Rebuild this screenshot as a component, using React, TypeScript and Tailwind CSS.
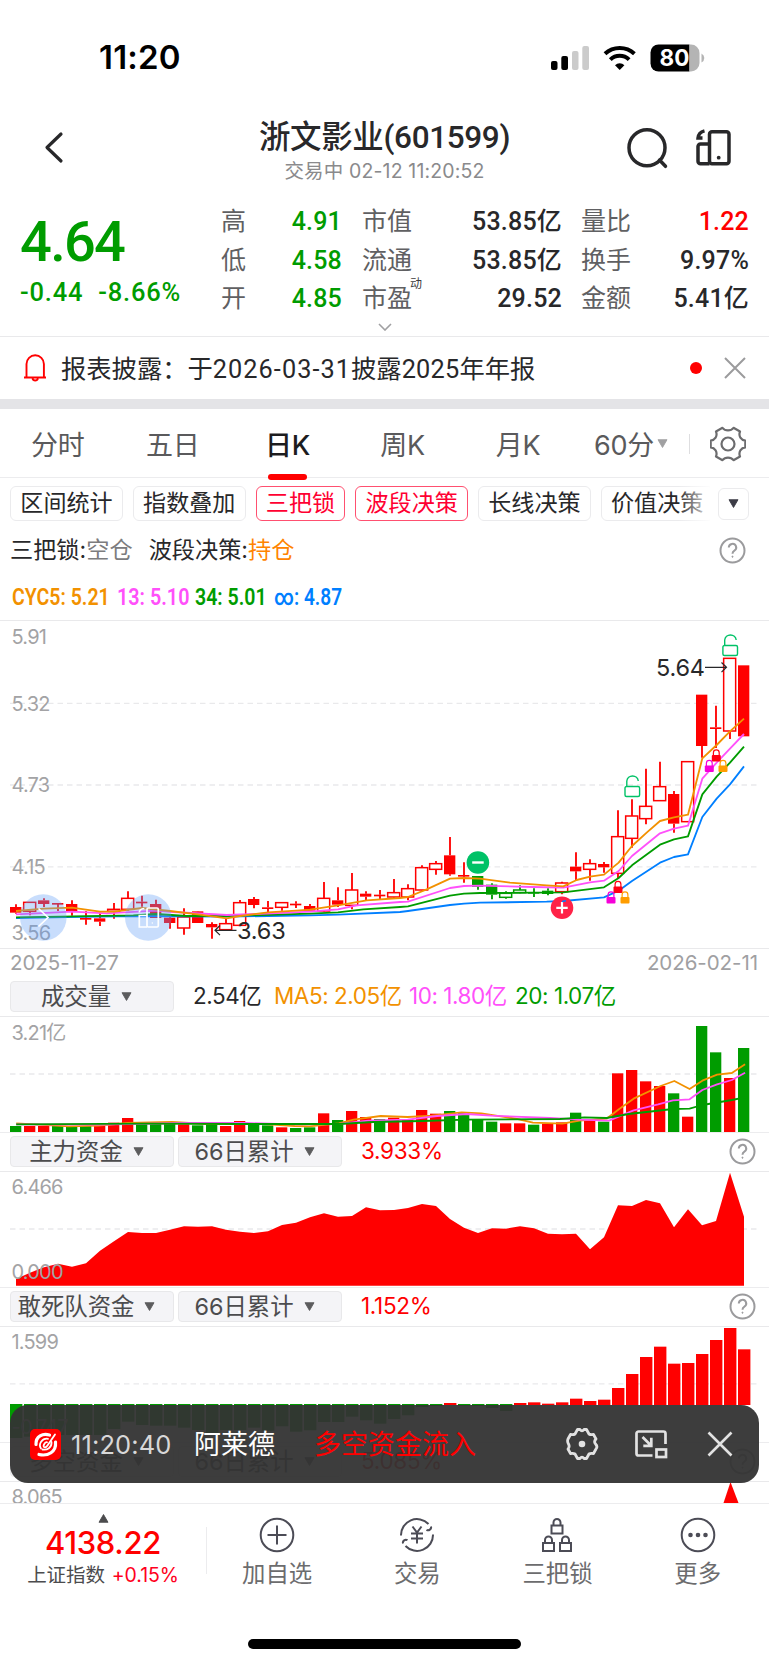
import React from "react";

const RED = "#ff0000";
const GREEN = "#009c00";
const ORANGE = "#f29100";
const PINK = "#ff50fa";
const BLUE = "#007fff";

type Candle = [number, number, number, number, "h" | "f" | "g" | "G"];

// wick top, body top, body bottom, wick bottom, kind
const candles: Candle[] = [
  [865, 873, 890, 893, "f"], [858, 859, 886, 898, "h"], [847, 853, 864, 873, "f"], [861, 861, 864, 885, "f"],
  [853, 864, 886, 899, "f"], [885, 906, 910, 926, "f"], [890, 907, 917, 930, "f"], [861, 880, 886, 908, "h"],
  [826, 847, 880, 884, "h"], [839, 857, 861, 872, "f"], [851, 864, 906, 906, "f"], [896, 905, 921, 938, "f"],
  [877, 903, 936, 956, "h"], [885, 886, 921, 921, "f"], [919, 924, 934, 968, "f"], [905, 923, 941, 941, "h"],
  [852, 860, 928, 930, "h"], [843, 849, 867, 877, "f"], [855, 874, 878, 888, "f"], [858, 860, 874, 884, "h"],
  [856, 863, 867, 876, "f"], [864, 870, 884, 884, "f"], [798, 847, 885, 887, "h"], [814, 853, 866, 873, "f"],
  [771, 822, 868, 880, "h"], [826, 833, 842, 852, "f"], [822, 836, 840, 850, "f"], [789, 830, 843, 845, "h"],
  [805, 818, 843, 853, "h"], [748, 755, 822, 824, "h"], [735, 743, 760, 776, "h"], [663, 718, 775, 779, "f"],
  [739, 777, 781, 800, "f"], [780, 780, 813, 821, "G"], [802, 806, 836, 850, "G"], [826, 832, 844, 848, "g"],
  [808, 822, 830, 832, "g"], [817, 828, 832, 843, "G"], [817, 824, 834, 838, "G"], [797, 801, 827, 835, "h"],
  [709, 752, 766, 794, "f"], [730, 743, 760, 794, "h"], [738, 744, 754, 770, "f"], [583, 662, 772, 787, "h"],
  [550, 600, 667, 695, "h"], [458, 571, 608, 625, "h"], [437, 512, 554, 555, "h"], [525, 534, 623, 650, "f"],
  [436, 437, 617, 618, "h"], [236, 236, 390, 425, "f"], [269, 334, 338, 396, "f"], [126, 127, 345, 369, "h"],
  [148, 148, 361, 361, "f"],
];

const cycLines: [string, string][] = [
  [BLUE, "48,906 200,903 400,900 680,902 930,898 1014,896 1200,888 1224,885 1350,867 1392,863 1440,860 1640,857 1690,855 1812,844 1856,824 1896,795 1980,740 2022,723 2064,715 2107,603 2150,548 2190,505 2232,451"],
  [GREEN, "48,904 400,898 468,894 560,900 680,900 930,893 1014,889 1090,880 1200,873 1224,871 1350,839 1392,833 1440,831 1600,830 1690,829 1812,814 1856,786 1896,748 1980,686 2022,670 2064,661 2107,535 2150,482 2190,440 2232,392"],
  [PINK, "48,895 216,887 320,892 468,884 520,888 680,897 800,893 930,887 1014,880 1070,868 1200,858 1224,857 1350,816 1392,810 1440,809 1600,813 1690,815 1770,799 1812,794 1856,765 1896,720 1980,652 2022,638 2064,629 2107,488 2150,440 2190,398 2232,354"],
  [ORANGE, "48,885 132,878 216,875 300,887 342,887 426,876 510,885 600,896 680,907 720,900 804,889 888,884 930,881 1014,868 1100,853 1200,846 1224,843 1280,820 1350,788 1392,786 1440,788 1530,800 1640,808 1690,811 1730,792 1770,782 1812,776 1856,740 1896,690 1940,650 1980,615 2022,604 2064,596 2107,427 2150,387 2190,346 2232,308"],
];

const volumes =
  "G468 R468 R468 G468 G468 G468 R468 R458 R444 G462 G462 G462 R463 G466 G460 R468 R453 G464 G466 R472 G474 G472 R430 G450 R423 R441 G447 R443 R447 R420 R431 G423 G427 G447 G455 R460 R460 G464 R461 R457 G428 R450 G455 R310 R300 R334 R348 G370 R440 G168 G247 R324 G234".split(" ");

const volumeLines: [string, [number, number][]][] = [
  [ORANGE, [[33, 460], [140, 469], [200, 467], [260, 459], [350, 456], [420, 462], [540, 462], [600, 468], [630, 469], [690, 460], [720, 449], [775, 438], [830, 441], [880, 437], [940, 427], [980, 430], [1010, 437], [1050, 446], [1085, 458], [1145, 461], [1180, 452], [1235, 446], [1260, 418], [1290, 386], [1345, 348], [1373, 333], [1404, 357], [1430, 332], [1460, 314], [1490, 309], [1517, 283]]],
  [PINK, [[33, 463], [200, 464], [380, 459], [500, 459], [600, 463], [690, 462], [750, 452], [830, 449], [890, 438], [950, 432], [1000, 437], [1120, 444], [1180, 449], [1240, 452], [1290, 421], [1340, 403], [1370, 391], [1404, 388], [1430, 360], [1460, 343], [1490, 330], [1517, 308]]],
  [GREEN, [[33, 463], [300, 461], [500, 462], [690, 462], [760, 456], [860, 453], [950, 449], [1140, 447], [1190, 442], [1235, 444], [1280, 432], [1370, 417], [1404, 416], [1430, 405], [1490, 390], [1517, 382]]],
];

const mainFunds = [357, 338, 322, 311, 320, 310, 272, 244, 216, 219, 219, 209, 199, 200, 199, 209, 215, 219, 214, 195, 188, 172, 160, 170, 168, 142, 151, 150, 144, 132, 138, 177, 203, 219, 205, 206, 199, 205, 221, 223, 221, 268, 232, 136, 138, 120, 130, 202, 148, 196, 183, 38, 170];

const squadFunds = [354, 350, 345, 345, 345, 345, 345, 327, 305, 315, 317, 317, 323, 330, 340, 330, 330, 323, 332, 319, 335, 331, 306, 306, 290, 301, 311, 297, 286, 261, 258, 249, 257, 258, 264, 273, 249, 247, 251, 247, 236, 243, 239, 204, 162, 111, 80, 131, 129, 102, 60, 24, 88];

const px = (i: number) => 16 + 14 * i;

function Grid({ y }: { y: number }) {
  return <line x1="10" x2="760" y1={y} y2={y} stroke="#e9e9eb" strokeWidth="1.3" strokeDasharray="5.5 4" />;
}

function AxisLabel({ y, x = 11.5, children }: { y: number; x?: number; children: string }) {
  return (
    <text x={x} y={y} fill="#a3a3a5" fontSize="20" letterSpacing="-0.8" className="font-['Inter','Noto_Sans_CJK_SC',sans-serif]">
      {children}
    </text>
  );
}

function OpenLock({ x, y }: { x: number; y: number }) {
  return (
    <g transform={`translate(${x} ${y})`} fill="none" stroke="#00c267" strokeWidth="1.4">
      <rect x="-7.3" y="0" width="14.6" height="10" rx="1.5" fill="#fff" />
      <path d="M-5.5 0V-5.5A5.8 5.8 0 0 1 6 -5.5" />
    </g>
  );
}

function SmallLock({ x, y, color }: { x: number; y: number; color: string }) {
  return (
    <g transform={`translate(${x} ${y})`}>
      <rect x="-4.5" y="0" width="9" height="6.6" rx="1" fill={color} />
      <path d="M-2.9 0.5V-2.2A2.9 2.9 0 0 1 2.9 -2.2V0.5" fill="none" stroke={color} strokeWidth="1.2" />
    </g>
  );
}

function CandleChart() {
  return (
    <svg viewBox="0 620 769 327" className="block h-[327px] w-full shrink-0">
      <Grid y={702.3} />
      <Grid y={784} />
      <Grid y={865.8} />
      <AxisLabel y={643.2}>5.91</AxisLabel>
      <AxisLabel y={709.5}>5.32</AxisLabel>
      <AxisLabel y={791.3}>4.73</AxisLabel>
      <AxisLabel y={873.3}>4.15</AxisLabel>
      <AxisLabel y={939}>3.56</AxisLabel>
      <g transform="translate(0 615) scale(0.33333)">
        {candles.map(([wt, bt, bb, wb, kind], i) => {
          const c = kind === "h" || kind === "f" ? RED : GREEN;
          const hollow = kind === "h" || kind === "g";
          const x = 48 + 42 * i;
          return (
            <g key={i} stroke={c} strokeWidth={hollow ? 4.5 : 5}>
              <path d={`M${x} ${wt}V${bt}M${x} ${bb}V${wb}`} strokeWidth="5.5" />
              {hollow ? (
                <rect x={x - 19} y={bt} width="36" height={Math.max(bb - bt, 4)} fill="#fff" />
              ) : (
                <rect x={x - 18} y={bt} width="34" height={Math.max(bb - bt, 5)} fill={c} stroke="none" />
              )}
            </g>
          );
        })}
        {cycLines.map(([c, pts]) => (
          <polyline key={c} points={pts} fill="none" stroke={c} strokeWidth="5.5" strokeLinejoin="round" />
        ))}
      </g>
      <circle cx="477.9" cy="861.5" r="11.3" fill="#00c267" />
      <path d="M472.2 861.5h11.5" stroke="#fff" strokeWidth="2.4" />
      <circle cx="562" cy="906.8" r="11.3" fill="#ff2247" />
      <path d="M556.3 906.8h11.4M562 901.1v11.4" stroke="#fff" strokeWidth="2.2" />
      <path d="M562 900.5L566 899.8" stroke={BLUE} strokeWidth="1.5" />
      <OpenLock x={632.3} y={785.5} />
      <OpenLock x={730.2} y={644.5} />
      <SmallLock x={618} y={885.5} color="#ff0012" />
      <SmallLock x={611} y={896} color="#f500d8" />
      <SmallLock x={625} y={896} color="#ff9d00" />
      <SmallLock x={716.3} y={754} color="#ff0012" />
      <SmallLock x={709.3} y={764.5} color="#f500d8" />
      <SmallLock x={723} y={764.5} color="#ff9d00" />
      <g className="font-['Inter',sans-serif]" fill="#28282a" fontSize="23.5" letterSpacing="-0.2">
        <text x="656" y="675">5.64</text>
        <text x="237" y="937.5">3.63</text>
      </g>
      <path d="M705 666.3h21.5M721.5 661.5l5 4.8-5 4.8M236.5 929.3h-21M220 924.5l-5 4.8 5 4.8" fill="none" stroke="#28282a" strokeWidth="1.2" />
      <g>
        <circle cx="43.3" cy="916.5" r="23.3" fill="#5e9cf5" fillOpacity="0.34" />
        <circle cx="148.3" cy="916.5" r="23.3" fill="#5e9cf5" fillOpacity="0.34" />
        <path d="M38.5 907.5l9.5 9-9.5 9" fill="none" stroke="#fff" strokeWidth="1.7" />
        <g fill="none" stroke="#fff" strokeWidth="1.7">
          <rect x="147" y="907" width="11.3" height="19" rx="1.2" />
          <path d="M147 914.5h-7.7v11.5h7.7M139.3 911.5q0-3.5 5-4" />
          <circle cx="152.3" cy="922" r="0.7" fill="#fff" stroke="none" />
        </g>
      </g>
    </svg>
  );
}

function VolumeChart() {
  return (
    <svg viewBox="0 0 769 115" className="block h-[115px] w-full shrink-0">
      <Grid y={57} />
      {volumes.map((v, i) => {
        const y = Number(v.slice(1)) / 3 - 47;
        return <rect key={i} x={px(i) - 6} y={y} width="11.3" height={115 - y} fill={v[0] === "R" ? RED : GREEN} />;
      })}
      {volumeLines.map(([c, pts]) => (
        <polyline key={c} points={pts.map(([x, y]) => `${x / 2.036},${y / 3 - 47}`).join(" ")} fill="none" stroke={c} strokeWidth="1.8" strokeLinejoin="round" />
      ))}
      <AxisLabel y={22.5}>3.21亿</AxisLabel>
    </svg>
  );
}

function MainFundsChart() {
  const pts = mainFunds.map((v, i) => `${px(i)},${v / 3 - 12}`).join(" ");
  return (
    <svg viewBox="0 0 769 115" className="block h-[115px] w-full shrink-0">
      <Grid y={57} />
      <polygon points={`16,113.8 ${pts} ${px(52)},113.8`} fill={RED} />
      <AxisLabel y={22}>6.466</AxisLabel>
      <AxisLabel y={107}>0.000</AxisLabel>
    </svg>
  );
}

function SquadFundsChart() {
  return (
    <svg viewBox="0 0 769 115" className="block h-[115px] w-full shrink-0">
      <Grid y={56.8} />
      {squadFunds.map((v, i) => {
        const y = v / 3 - 7;
        const up = v < 254;
        return <rect key={i} x={px(i) - 6} y={up ? y : 77} width="12.4" height={up ? 78 - y : y - 77} fill={up ? RED : GREEN} />;
      })}
      <AxisLabel y={22}>1.599</AxisLabel>
      <AxisLabel y={107}>-0.747</AxisLabel>
    </svg>
  );
}

function Help({ className = "" }: { className?: string }) {
  return (
    <svg viewBox="0 0 27 27" className={`h-[27px] w-[27px] shrink-0 ${className}`} fill="none" stroke="#9b9b9d" strokeWidth="2">
      <circle cx="13.5" cy="13.5" r="12" />
      <path d="M9.8 10.6a3.7 3.7 0 1 1 5.6 3.1c-1.3.8-1.9 1.4-1.9 3" />
      <circle cx="13.5" cy="19.7" r="0.6" fill="#9b9b9d" stroke="#9b9b9d" strokeWidth="0.9" />
    </svg>
  );
}

function Triangle({ className = "" }: { className?: string }) {
  return (
    <svg viewBox="0 0 12 10" className={`h-[9px] w-[11px] ${className}`}>
      <path d="M1 .8h10L6 9.4z" fill="currentColor" stroke="currentColor" strokeLinejoin="round" />
    </svg>
  );
}

function Pill({ children }: { children: string }) {
  return (
    <div className="flex h-[31px] w-[164px] items-center justify-center gap-[10px] rounded-[4px] border border-[#e8e8ea] bg-[#f4f4f7] pr-[11px] text-[23.4px] tracking-normal text-[#4c4c4e]">
      <span>{children}</span>
      <Triangle className="text-[#5c5c5e]" />
    </div>
  );
}

function IndicatorHeader({ name, value }: { name: string; value: string }) {
  return (
    <div className="flex h-10 shrink-0 items-center gap-[4px] border-y border-[#e9e9eb] border-t-[#ececee] pb-px pl-[10px] pr-[13px]">
      <Pill>{name}</Pill>
      <Pill>66日累计</Pill>
      <span className="ml-[15px] text-[22.5px] tracking-[-0.3px] text-[#ff0000]">{value}</span>
      <Help className="ml-auto" />
    </div>
  );
}

const quotes: { label: string; value: string; tone: string; sup?: string }[][] = [
  [
    { label: "高", value: "4.91", tone: "text-[#009c00]" },
    { label: "低", value: "4.58", tone: "text-[#009c00]" },
    { label: "开", value: "4.85", tone: "text-[#009c00]" },
  ],
  [
    { label: "市值", value: "53.85亿", tone: "text-[#28282a]" },
    { label: "流通", value: "53.85亿", tone: "text-[#28282a]" },
    { label: "市盈", value: "29.52", tone: "text-[#28282a]", sup: "动" },
  ],
  [
    { label: "量比", value: "1.22", tone: "text-[#ff0000]" },
    { label: "换手", value: "9.97%", tone: "text-[#28282a]" },
    { label: "金额", value: "5.41亿", tone: "text-[#28282a]" },
  ],
];

function QuoteColumn({ rows, className }: { rows: (typeof quotes)[number]; className: string }) {
  return (
    <div className={`flex flex-col pt-px ${className}`}>
      {rows.map((r) => (
        <div key={r.label} className="flex h-[39px] items-center justify-between text-[25px]">
          <span className="relative text-[#606062]">
            {r.label}
            {r.sup && <span className="absolute -top-[8px] left-[48px] text-[12px] leading-[12px] text-[#3c3c3e]">{r.sup}</span>}
          </span>
          <span className={`font-['Roboto','Noto_Sans_CJK_SC',sans-serif] font-medium tracking-[0.2px] ${r.tone}`}>{r.value}</span>
        </div>
      ))}
    </div>
  );
}

function Chip({ children, active = false }: { children: string; active?: boolean }) {
  return (
    <div
      className={`flex h-[35px] shrink-0 items-center rounded-[6px] border px-[9.3px] text-[23.1px] ${
        active ? "border-[#ff5070] text-[#ff0032]" : "border-[#ebebed] text-[#28282a]"
      }`}
    >
      {children}
    </div>
  );
}

function NavItem({ label, children }: { label: string; children: React.ReactNode }) {
  return (
    <div className="flex w-[140.2px] flex-col items-center text-[#4c4c56]">
      <svg viewBox="0 0 36 36" className="mt-[13px] h-9 w-9" fill="none" stroke="currentColor" strokeWidth="2">
        {children}
      </svg>
      <span className="mt-[4px] text-[23.4px] leading-[34px] text-[#6c6c6e]">{label}</span>
    </div>
  );
}

function Toast() {
  return (
    <div className="absolute left-[10px] top-[1405px] flex h-[78px] w-[749px] items-center rounded-[18px] bg-[#333333]/95 text-[25.5px]">
      <svg viewBox="0 0 31 31" className="ml-[20px] h-[31px] w-[31px]">
        <rect width="31" height="31" rx="5" fill="#ff0000" />
        <g fill="none" stroke="#fff" strokeLinecap="round">
          <path d="M6 15.500C5.500 7 13 4 19.500 6" strokeWidth="3.200" />
          <path d="M25.500 13C26.500 23 18 27.500 9 25.500" strokeWidth="3.200" />
          <path d="M18 9.800C12 9 8 15 11 19.500" strokeWidth="1.800" />
          <path d="M25 5.500L17.500 16.500C15.500 19.500 12.500 18.500 14 15.500S17 13.200 17 13.200" strokeWidth="1.800" />
          <path d="M21.500 13C22 18.500 17 21.500 12.500 20.500" strokeWidth="1.800" />
        </g>
      </svg>
      <span className="ml-[10px] mt-px w-[123px] tracking-[0.100px] text-[#d8d8d8]">11:20:40</span>
      <span className="mt-px w-[120px] text-[27px] text-white">阿莱德</span>
      <span className="mt-px text-[27px] text-[#ff0000]">多空资金流入</span>
      <svg viewBox="0 0 34 34" className="ml-auto h-[34px] w-[34px]" fill="none" stroke="#e2e2e2" strokeWidth="2.8" strokeLinejoin="round">
        <path d="M12.500 2.500h2.500q2 2.800 4 0h2.500l2.500 4.500q1.500 1 4.500 .500l2.500 4.500q-2.500 2.500-.500 5q2.500 2.500 .500 5l-2.500 4.500q-3-.500-4.500 .500l-2.500 4.500h-2.500q-2-2.800-4 0h-2.500l-2.500-4.500q-1.500-1-4.500-.500l-2.500-4.500q2-2.500 .500-5q-1.500-2.500-.500-5l2.500-4.500q3 .500 4.500-.500z" />
        <circle cx="17" cy="17" r="3.300" fill="#e2e2e2" stroke="none" />
      </svg>
      <svg viewBox="0 0 34 30" className="ml-[35px] h-[30px] w-[34px]" fill="none" stroke="#e2e2e2" strokeWidth="2.700">
        <path d="M31.500 15V4.500a2 2 0 0 0-2-2h-25a2 2 0 0 0-2 2v20a2 2 0 0 0 2 2h14M8.500 8l8 8M17.300 8.800v8H9.300" />
        <rect x="22.500" y="20.500" width="9.500" height="7.500" />
      </svg>
      <svg viewBox="0 0 26 26" className="ml-[39px] mr-[26px] h-[26px] w-[26px]" fill="none" stroke="#e2e2e2" strokeWidth="2.600">
        <path d="M1.500 1.500l23 23M24.500 1.500l-23 23" />
      </svg>
    </div>
  );
}

export default function App() {
  return (
    <div className="relative flex h-[1665px] w-[769px] flex-col overflow-hidden bg-white font-['Inter','Noto_Sans_CJK_SC',sans-serif] leading-none text-[#28282a]">
      {/* status bar */}
      <div className="flex h-[100px] shrink-0 items-center justify-between pl-[99px] pr-[64px] pt-[15px]">
        <span className="text-[33px] font-semibold tracking-[0.200px] text-black">11:20</span>
        <svg viewBox="0 0 154 28" className="h-7 w-[154px]">
          <rect x="0" y="17" width="6.5" height="9" rx="2" />
          <rect x="10.3" y="12" width="6.700" height="14" rx="2" />
          <rect x="21" y="7" width="6.500" height="19" rx="2" fill="#cbcbcb" />
          <rect x="31.300" y="2" width="6.700" height="24" rx="2" fill="#cbcbcb" />
          <g fill="none" stroke="#000" strokeWidth="4">
            <path d="M54 9.800a21.500 21.500 0 0 1 29.400 0" />
            <path d="M59.300 15.600a13.500 13.500 0 0 1 18.800 0" />
          </g>
          <path d="M68.700 26l-4.700-4.800a6.800 6.800 0 0 1 9.400 0z" />
          <path d="M107.500.5h31v27h-31a8 8 0 0 1-8-8v-11a8 8 0 0 1 8-8z" />
          <path d="M138.500.5h1.500a8.500 8.500 0 0 1 8.500 8.500v10a8.500 8.500 0 0 1-8.500 8.500h-1.500z" fill="#b4b4b4" />
          <path d="M150.500 9.500q2.800 1.500 2.800 4.500t-2.800 4.500z" fill="#b4b4b4" />
          <text x="108.500" y="22" fill="#fff" fontSize="22.500" fontWeight="700" className="font-['Inter',sans-serif]">80</text>
        </svg>
      </div>

      {/* title bar */}
      <div className="flex h-[101px] shrink-0 items-start justify-between px-[36px]">
        <div className="flex w-[120px]">
          <svg viewBox="0 0 36 44" className="ml-[3px] mt-[25px] h-11 w-9" fill="none" stroke="#28282a" strokeWidth="3.200" strokeLinejoin="round" strokeLinecap="round">
            <path d="M22 9L8 22.500 22 36" />
          </svg>
        </div>
        <div className="flex flex-col items-center">
          <h1 className="mt-[20px] font-['Roboto','Noto_Sans_CJK_SC',sans-serif] text-[31.500px] font-medium leading-[36px] tracking-[-0.350px]">浙文影业(601599)</h1>
          <span className="mt-[5px] text-[19.500px] leading-[20px] tracking-[0.150px] text-[#8a8a8c]">交易中 02-12 11:20:52</span>
        </div>
        <svg viewBox="0 0 120 60" className="mt-[18px] h-[60px] w-[120px]" fill="none" stroke="#28282a" strokeWidth="3.500">
          <circle cx="34" cy="29.700" r="18" />
          <path d="M46.500 42l6 6.300" strokeLinecap="round" />
          <rect x="96.500" y="13.800" width="19.500" height="32" rx="2.500" />
          <path d="M96.500 26h-9a2.500 2.500 0 0 0-2.500 2.500v14.800a2.500 2.500 0 0 0 2.500 2.500h9" />
          <circle cx="105.700" cy="39.700" r="1.900" fill="#28282a" stroke="none" />
          <path d="M91.500 12.800q-6 1.500-6.500 7.200h4.500" strokeWidth="3.400" />
        </svg>
      </div>

      {/* quote */}
      <div className="flex h-[136px] shrink-0 flex-col border-b border-[#e9e9eb]">
        <div className="flex h-[117px]">
          <div className="w-[221px] pl-[20px] font-['Roboto',sans-serif] font-medium text-[#009c00]">
            <div className="pt-[13px] text-[56px] leading-[56px] tracking-[-1.700px]">4.64</div>
            <div className="mt-[8px] flex gap-[15px] text-[25.500px] leading-[28px] tracking-[0.800px]">
              <span>-0.44</span>
              <span>-8.66%</span>
            </div>
          </div>
          <QuoteColumn rows={quotes[0]} className="w-[121px]" />
          <QuoteColumn rows={quotes[1]} className="ml-[20px] w-[200px]" />
          <QuoteColumn rows={quotes[2]} className="ml-[19px] w-[168px]" />
        </div>
        <svg viewBox="0 0 14 8" className="mx-auto mt-[5px] h-2 w-[14px]" fill="none" stroke="#a0a0a2" strokeWidth="1.600">
          <path d="M1 1l6 6 6-6" />
        </svg>
      </div>

      {/* notice */}
      <div className="flex h-[62px] shrink-0 items-center pl-[23px] pr-[23px]">
        <svg viewBox="0 0 24 30" className="h-[30px] w-6" fill="none" stroke="#ff0000" strokeWidth="1.900">
          <path d="M1 24.500h22M3.500 24V11a8.700 8.700 0 0 1 17.400 0v13M9.500 25.500a2.800 2.800 0 0 0 5.400 0" />
        </svg>
        <span className="ml-[14px] mt-[4px] font-['Roboto','Noto_Sans_CJK_SC',sans-serif] text-[25.300px]">
          报表披露：于<span className="tracking-[1.050px]">2026-03-31</span>披露<span className="tracking-[0.250px]">2025</span>年年报
        </span>
        <span className="ml-auto h-[12px] w-[12px] rounded-full bg-[#ff0000]" />
        <svg viewBox="0 0 22 22" className="ml-[22px] h-[22px] w-[22px]" fill="none" stroke="#9b9b9d" strokeWidth="2">
          <path d="M1 1l20 20M21 1L1 21" />
        </svg>
      </div>
      <div className="h-[10px] shrink-0 bg-[#e4e4e7]" />

      {/* period tabs */}
      <div className="flex h-[69px] shrink-0 items-center border-b border-[#ececee] pt-[5px] text-[27px] tracking-[-0.300px] text-[#5a5a5c]">
        <span className="w-[115px] pl-[31px]">分时</span>
        <span className="w-[115px] pl-[31px]">五日</span>
        <span className="relative flex h-full w-[115px] items-center justify-center font-medium text-[#1c1c1e]">
          日K
          <span className="absolute -bottom-[3px] left-[38px] h-[6px] w-[39px] rounded-[3px] bg-[#ff0000]" />
        </span>
        <span className="w-[115px] text-center">周K</span>
        <span className="w-[116px] text-center">月K</span>
        <span className="flex w-[112px] items-center gap-[3px] pl-[18px]">
          60分
          <Triangle className="-mt-[4px] h-[8px] text-[#a0a0a2]" />
        </span>
        <span className="-mt-[4px] ml-[1px] h-[20px] w-px bg-[#dedee0]" />
        <svg viewBox="0 0 36 36" className="-mt-[4px] ml-[20px] h-9 w-9" fill="none" stroke="#6c6c6e" strokeWidth="2.200" strokeLinejoin="round">
          <path d="M12.500 1.800q2 2.600 5.500 2.600t5.500-2.600l6.500 3.700q-1.300 3.300.4 6.200 1.700 2.600 4.900 3v6.600q-3.200.4-4.900 3-1.700 2.900-.4 6.200l-6.500 3.700q-2-2.600-5.500-2.600t-5.500 2.600L6 30.500q1.300-3.300-.4-6.200-1.700-2.600-4.900-3v-6.600q3.200-.4 4.900-3Q7.300 8.800 6 5.500z" />
          <circle cx="18" cy="18" r="6.500" />
        </svg>
      </div>

      {/* indicator chips */}
      <div className="relative flex h-[51px] shrink-0 items-center pl-[10px]">
        <div className="flex w-[700px] gap-[9.800px] overflow-hidden">
          <Chip>区间统计</Chip>
          <Chip>指数叠加</Chip>
          <Chip active>三把锁</Chip>
          <Chip active>波段决策</Chip>
          <Chip>长线决策</Chip>
          <Chip>价值决策</Chip>
        </div>
        <div className="absolute right-[55px] top-0 h-full w-[36px] bg-gradient-to-r from-white/0 to-white" />
        <div className="ml-[8px] flex h-[32px] w-[31px] items-center justify-center rounded-[6px] border border-[#ebebed] bg-white">
          <Triangle className="text-[#3c3c46]" />
        </div>
      </div>

      {/* strategy state */}
      <div className="flex h-[43px] shrink-0 items-center pl-[10px] pr-[23px] text-[23.200px]">
        <span>三把锁:</span>
        <span className="text-[#7c7c7e]">空仓</span>
        <span className="ml-[16px]">波段决策:</span>
        <span className="text-[#ff8400]">持仓</span>
        <Help className="ml-auto" />
      </div>
      <div className="flex h-[49px] shrink-0 items-center whitespace-nowrap border-b border-[#e9e9eb] pl-[12px] pt-[3px] font-['Roboto','Noto_Sans_CJK_SC',sans-serif] text-[23px] font-semibold">
        <span className="w-[105px]">
          <span className="inline-block origin-left scale-x-[0.850] text-[#f29100]">CYC5: 5.21</span>
        </span>
        <span className="w-[78px]">
          <span className="inline-block origin-left scale-x-[0.860] text-[#ff50fa]">13: 5.10</span>
        </span>
        <span className="w-[79px]">
          <span className="inline-block origin-left scale-x-[0.850] text-[#009c00]">34: 5.01</span>
        </span>
        <span className="inline-block origin-left scale-x-[0.830] text-[#007fff]">∞: 4.87</span>
      </div>

      <CandleChart />

      <div className="flex h-[29px] shrink-0 items-center justify-between border-t border-[#e9e9eb] pl-[10px] pr-[11px] text-[20.500px] tracking-[-0.050px] text-[#a0a0a2]">
        <span>2025-11-27</span>
        <span>2026-02-11</span>
      </div>

      <div className="flex h-10 shrink-0 items-center border-b border-[#e9e9eb] pl-[10px] text-[22.500px] tracking-[-0.450px]">
        <Pill>成交量</Pill>
        <span className="ml-[19px] w-[81px]">2.54亿</span>
        <span className="w-[135px] text-[#f29100]">MA5: 2.05亿</span>
        <span className="w-[106px] text-[#ff50fa]">10: 1.80亿</span>
        <span className="text-[#009c00]">20: 1.07亿</span>
      </div>
      <VolumeChart />
      <IndicatorHeader name="主力资金" value="3.933%" />
      <MainFundsChart />
      <IndicatorHeader name="敢死队资金" value="1.152%" />
      <SquadFundsChart />
      <IndicatorHeader name="多空资金" value="5.085%" />
      <svg viewBox="0 0 769 21" className="block h-[21px] w-full shrink-0">
        <AxisLabel y={22}>8.065</AxisLabel>
        <path d="M730.500 0L738.500 21H723.500z" fill={RED} />
      </svg>

      {/* bottom navigation */}
      <div className="flex h-[162px] shrink-0 items-start border-t border-[#ececee] bg-white">
        <div className="flex w-[206px] flex-col items-center">
          <Triangle className="mt-[10px] h-[7px] w-[9px] rotate-180 text-[#4c4c4e]" />
          <span className="mt-[4px] text-[31px] font-medium leading-[31px] tracking-[-0.350px] text-[#ff0000]">4138.22</span>
          <div className="mt-[5px] flex gap-[7px] text-[19.500px] leading-[24px] tracking-[-0.100px] text-[#4c4c4e]">
            <span>上证指数</span>
            <span className="text-[#ff0020]">+0.15%</span>
          </div>
        </div>
        <span className="mt-[23px] h-[47px] w-px bg-[#ececee]" />
        <NavItem label="加自选">
          <circle cx="18" cy="18" r="16.300" />
          <path d="M18 8.500v19M8.500 18h19" />
        </NavItem>
        <NavItem label="交易">
          <path d="M2 18.500A16 16 0 0 1 29.500 7M32 9.500a3 3 0 0 1-4.500 3.300M34 17.500A16 16 0 0 1 6.500 29M4 26.500a3 3 0 0 1 4.500-3.300" />
          <path d="M13.500 9.500L18 15.500l4.500-6M18 15.500v11M12 16.500h12M12 21.500h12" />
        </NavItem>
        <NavItem label="三把锁">
          <rect x="12.500" y="8.500" width="11" height="8" />
          <path d="M14.500 8.500V5.500a3.500 3.500 0 0 1 7 0v3" />
          <rect x="4" y="26" width="11" height="8" />
          <path d="M6 26v-3a3.500 3.500 0 0 1 7 0v3" />
          <rect x="21" y="26" width="11" height="8" />
          <path d="M23 26v-3a3.500 3.500 0 0 1 7 0v3" />
        </NavItem>
        <NavItem label="更多">
          <circle cx="18" cy="18" r="16.300" />
          <g fill="currentColor" stroke="none">
            <circle cx="10.500" cy="18" r="2.300" />
            <circle cx="18" cy="18" r="2.300" />
            <circle cx="25.500" cy="18" r="2.300" />
          </g>
        </NavItem>
      </div>
      <div className="absolute bottom-[16px] left-[248px] h-[10px] w-[273px] rounded-full bg-black" />

      <Toast />
    </div>
  );
}
